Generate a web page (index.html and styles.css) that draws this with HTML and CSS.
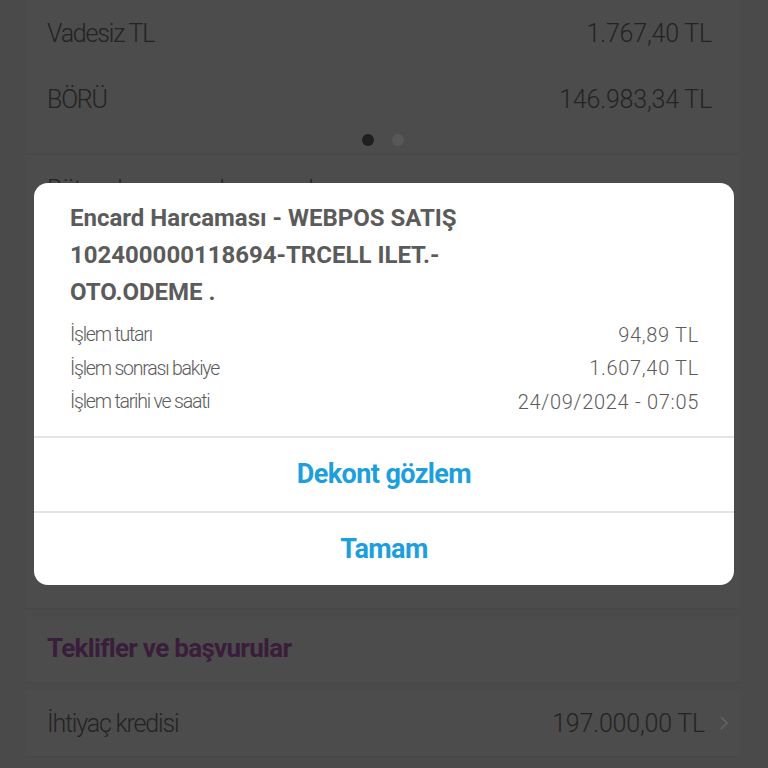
FILE: index.html
```html
<!DOCTYPE html>
<html lang="tr">
<head>
    <meta charset="UTF-8">
    <title>Hesap hareketi</title>
    <link rel="stylesheet" href="styles.css">
</head>
<body>
<div id="page">
    <div class="card accounts">
        <div class="row">
            <span class="label">Vadesiz TL</span>
            <span class="value">1.767,40 TL</span>
        </div>
        <div class="row">
            <span class="label">BÖRÜ</span>
            <span class="value">146.983,34 TL</span>
        </div>
        <div class="dots">
            <span class="dot active"></span>
            <span class="dot"></span>
        </div>
    </div>
    <div class="card budget">
        <div class="row link">
            <span class="label">Bütçe durumu ve harcamalar</span>
            <svg class="chevron" width="8" height="14" viewBox="0 0 8 14"><path d="M1 1l6 6-6 6" fill="none" stroke="currentColor" stroke-width="1.6"/></svg>
        </div>
    </div>
    <div class="card offers">
        <span class="heading">Teklifler ve başvurular</span>
    </div>
    <div class="card loan">
        <div class="row link">
            <span class="label">İhtiyaç kredisi</span>
            <span class="value">197.000,00 TL</span>
            <svg class="chevron" width="8" height="14" viewBox="0 0 8 14"><path d="M1 1l6 6-6 6" fill="none" stroke="currentColor" stroke-width="1.6"/></svg>
        </div>
    </div>
</div>

<div id="dialog">
    <div class="dialog-body">
        <h1 class="title">Encard Harcaması - WEBPOS SATIŞ 102400000118694-TRCELL ILET.- OTO.ODEME .</h1>
        <ul class="details">
            <li><span>İşlem tutarı</span><span class="amount">94,89 TL</span></li>
            <li><span>İşlem sonrası bakiye</span><span class="amount">1.607,40 TL</span></li>
            <li><span>İşlem tarihi ve saati</span><span class="amount">24/09/2024 - 07:05</span></li>
        </ul>
    </div>
    <div class="dialog-btn">Dekont gözlem</div>
    <div class="dialog-btn">Tamam</div>
</div>
</body>
</html>
```

FILE: styles.css
```css
*{
    margin: 0;
    padding: 0;
}
ul{
    list-style: none;
}
body{
    width: 768px;
    height: 768px;
    overflow: hidden;
    background: #4a4a4a;
    font-family: Roboto, "Noto Sans", sans-serif;
    position: relative;
}
#page{
    display: flex;
    flex-direction: column;
    padding: 0 28px 0 25px;
}
.card{
    background: #4c4c4c;
    border-bottom: 1px solid #474747;
}
.accounts{
    height: 153px;
}
.budget{
    margin-top: 2px;
    height: 452px;
}
.offers{
    margin-top: 8px;
    height: 65px;
    display: flex;
    align-items: center;
    padding-left: 22px;
}
.loan{
    margin-top: 7px;
    height: 66px;
}
.row{
    height: 66px;
    display: flex;
    align-items: center;
    justify-content: space-between;
    padding: 0 28px 0 22px;
    color: #232323;
    font-size: 25px;
    font-weight: 300;
    letter-spacing: -1.2px;
}
.row .value{
    letter-spacing: -0.2px;
}
.row.link{
    padding-right: 12px;
}
.loan .value{
    margin-left: auto;
    margin-right: 15px;
}
.chevron{
    color: #626262;
}
.dots{
    display: flex;
    justify-content: center;
    gap: 18px;
    padding-top: 2px;
}
.dot{
    width: 12px;
    height: 12px;
    border-radius: 50%;
    background: #585858;
}
.dot.active{
    background: #1f1f1f;
}
.heading{
    color: #3a1d3b;
    font-size: 26px;
    font-weight: 700;
    letter-spacing: -0.7px;
    margin-top: -3px;
}

#dialog{
    position: absolute;
    left: 34px;
    top: 183px;
    width: 700px;
    height: 402px;
    background: #fff;
    border-radius: 14px;
    overflow: hidden;
}
.dialog-body{
    padding: 17px 35px 17px 36px;
    border-bottom: 2px solid #e4e4e4;
    color: #5b5b5b;
}
.title{
    width: 440px;
    font-size: 24px;
    line-height: 37px;
    font-weight: 700;
    letter-spacing: 0;
}
.details{
    margin-top: 7px;
    font-size: 19.5px;
    font-weight: 300;
    letter-spacing: -1.2px;
}
.details li{
    height: 33.5px;
    display: flex;
    align-items: center;
    justify-content: space-between;
}
.details .amount{
    font-size: 20px;
    letter-spacing: 0.7px;
}
.dialog-btn{
    height: 73px;
    display: flex;
    align-items: center;
    justify-content: center;
    color: #1d9fdd;
    font-size: 27px;
    font-weight: 700;
    letter-spacing: -0.6px;
}
.dialog-btn + .dialog-btn{
    border-top: 2px solid #e4e4e4;
}
```
